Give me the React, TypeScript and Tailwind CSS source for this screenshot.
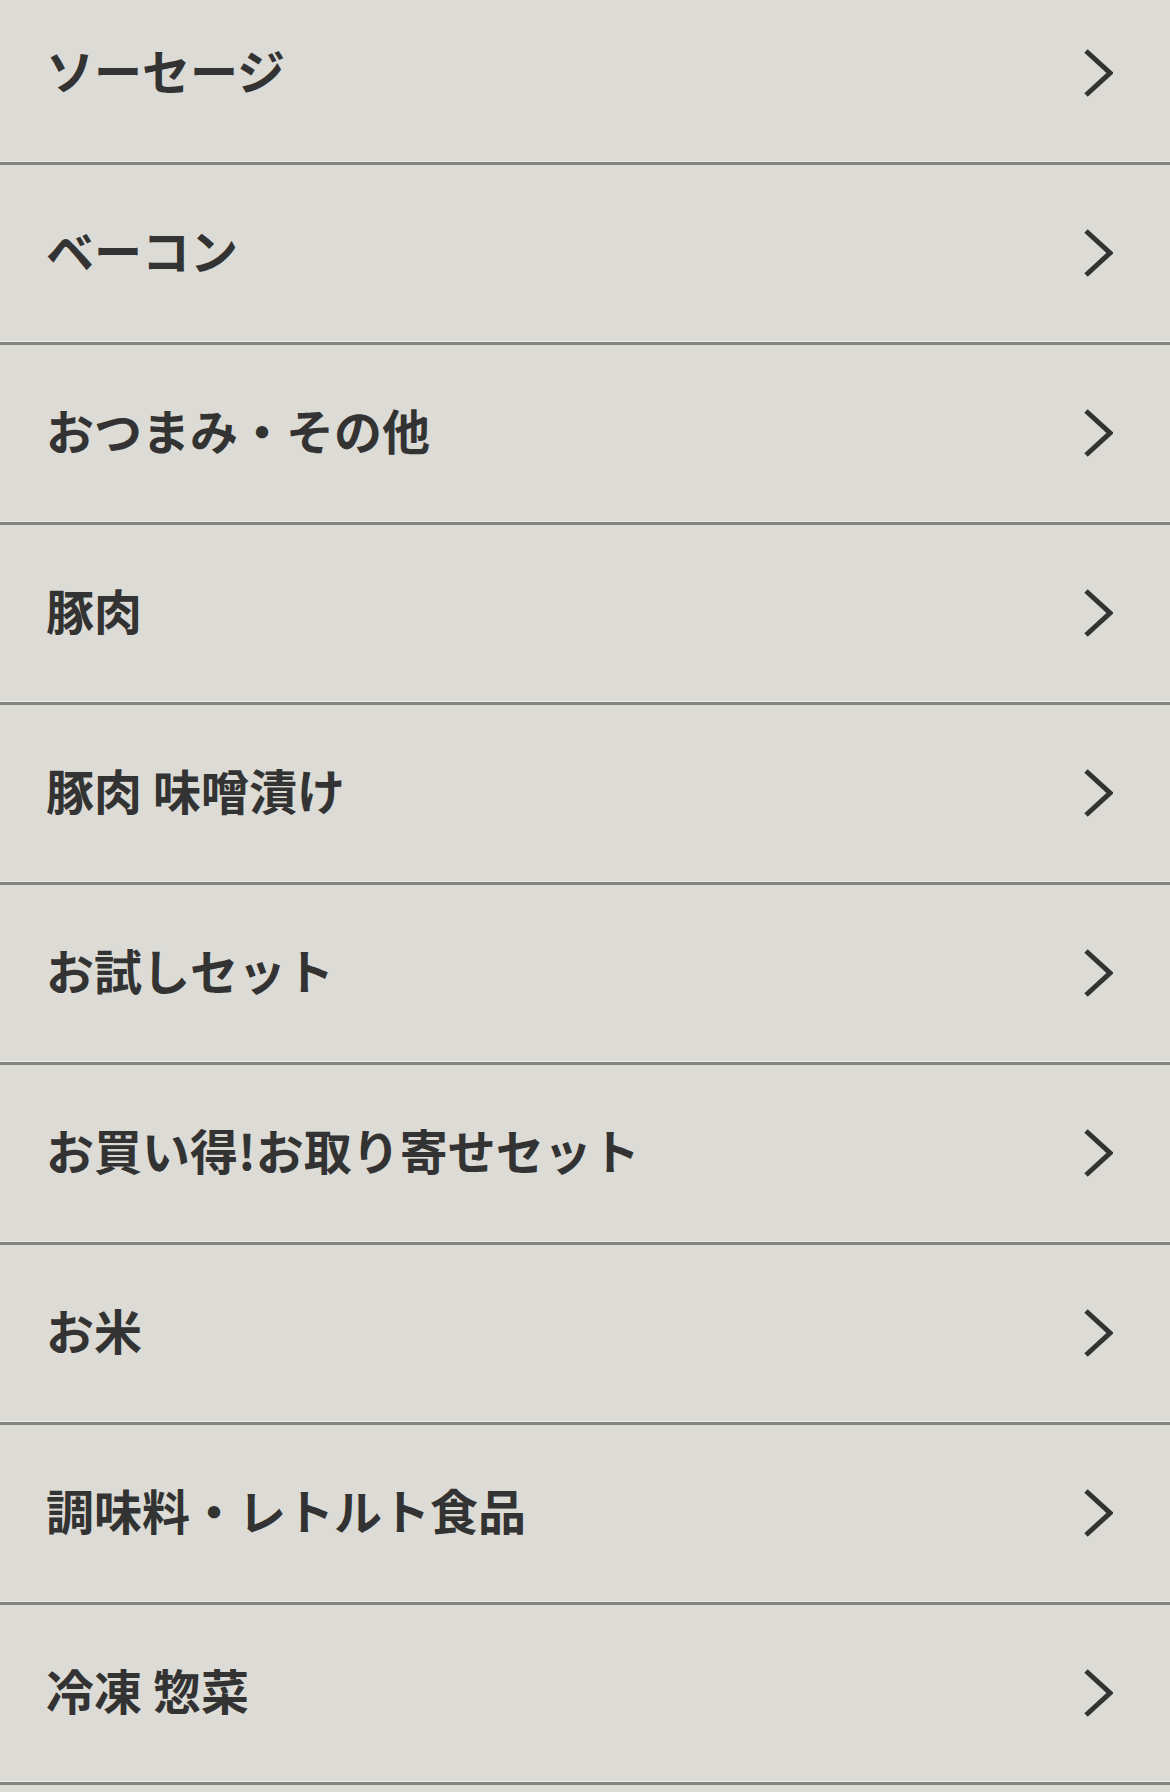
import React from "react";

const items = [
  "ソーセージ",
  "ベーコン",
  "おつまみ・その他",
  "豚肉",
  "豚肉 味噌漬け",
  "お試しセット",
  "お買い得!お取り寄せセット",
  "お米",
  "調味料・レトルト食品",
  "冷凍 惣菜",
];

function Chevron() {
  return (
    <svg width="30" height="48" viewBox="0 0 30 48" fill="none" className="shrink-0">
      <path d="M3 2 L27 24 L3 46" stroke="#333333" strokeWidth="5" strokeLinecap="butt" strokeLinejoin="miter" />
    </svg>
  );
}

export default function App() {
  return (
    <div
      className="w-[1170px] h-[1792px] overflow-hidden bg-[#dcdbd5]"
      style={{ fontFamily: '"Noto Sans CJK JP", "Noto Sans", sans-serif' }}
    >
      <ul className="-mt-[15px]">
        {items.map((t) => (
          <li key={t} className="border-b-[3px] border-[#858580]">
            <div className="h-[176px] flex items-center justify-between pl-[46px] pr-[57px]">
              <span className="text-[48px] font-bold text-[#333333] leading-none pb-[8px]">{t}</span>
              <Chevron />
            </div>
            <div className="h-px bg-[#ecebe7]" />
          </li>
        ))}
      </ul>
    </div>
  );
}
